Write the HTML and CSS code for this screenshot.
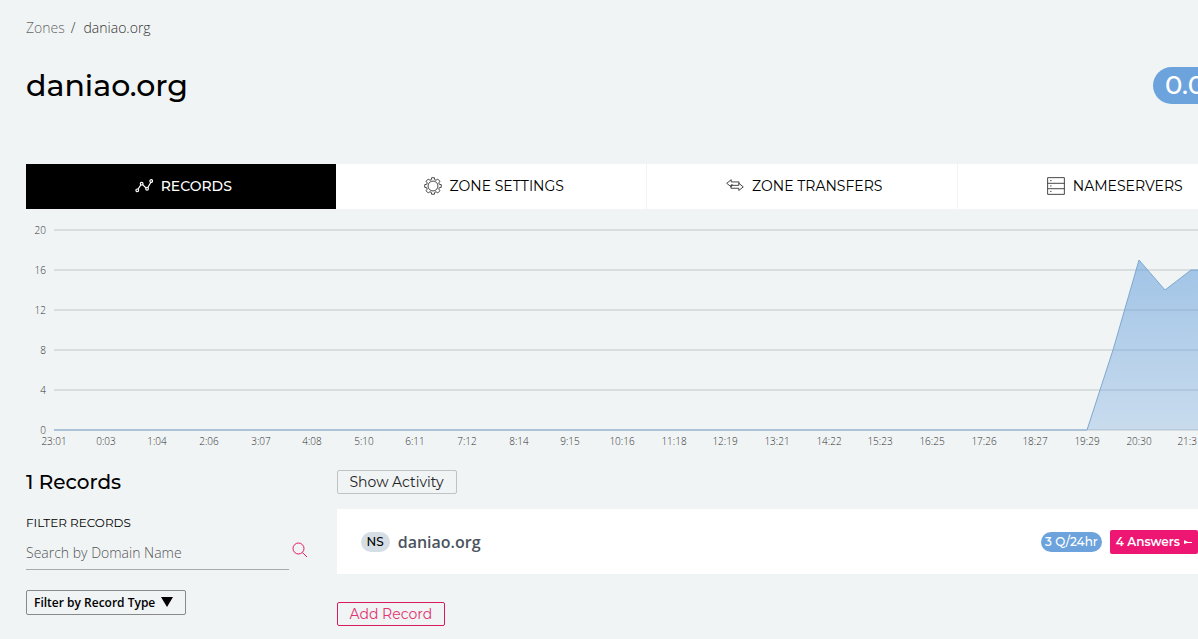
FILE: index.html
```html
<!DOCTYPE html>
<html lang="en">
<head>
<meta charset="utf-8">
<title>daniao.org</title>
<link rel="stylesheet" href="styles.css">
</head>
<body>
<div class="page">
  <nav class="breadcrumb" aria-label="Breadcrumb">
    <a class="crumb-link" href="#">Zones</a><span class="crumb-sep">/</span><span>daniao.org</span>
  </nav>
  <header class="zone-header">
    <h1 class="zone-title">daniao.org</h1>
    <span class="rate-pill">0.00</span>
  </header>
  <nav class="tabs" aria-label="Zone sections">
    <a class="tab tab-active" href="#">
      <svg class="tab-icon" viewBox="0 0 20 20" aria-hidden="true"><path d="M3.400 13.500 6.600 8.600M8.500 8.500l4 4M14.200 11.800l3.600-6.200"/><circle cx="2.500" cy="14.800" r="1.500"/><circle cx="7.400" cy="7.400" r="1.500"/><circle cx="13.400" cy="13" r="1.500"/><circle cx="18" cy="4.500" r="1.500"/></svg>
      Records
    </a>
    <a class="tab" href="#">
      <svg class="tab-icon" viewBox="0 0 20 20" aria-hidden="true"><circle cx="10" cy="10" r="5.500"/><path d="M8.500.8h3l.4 2.200 1.500.6 1.900-1.300 2.400 2.400-1.300 1.900.6 1.500 2.200.4v3l-2.200.4-.6 1.500 1.300 1.900-2.400 2.400-1.900-1.300-1.500.6-.4 2.200h-3l-.4-2.200-1.500-.6-1.900 1.300-2.400-2.400 1.300-1.900-.6-1.500L.8 11.500v-3L3 8.100l.6-1.500-1.300-1.900 2.400-2.400 1.900 1.300L8.100 3z"/></svg>
      Zone Settings
    </a>
    <a class="tab" href="#">
      <svg class="tab-icon" viewBox="0 0 20 20" aria-hidden="true"><path d="M14.500 7.700V5.500H5.800V3L.8 7l5 4V8.700h1.700M5.500 9.300v3.200h8.700V15l5-4-5-4v2.300z"/></svg>
      Zone Transfers
    </a>
    <a class="tab" href="#">
      <svg class="tab-icon" viewBox="0 0 20 20" aria-hidden="true"><path d="M.7.7h18.600v18.600H.7zM.7 7h18.600M.7 13h18.600M3.500 4h1.500M3.500 10h1.500M3.500 16h1.500"/></svg>
      Nameservers
    </a>
  </nav>

  <svg class="chart" viewBox="0 0 1242 240" role="img" aria-label="Queries over the last 24 hours">
    <defs>
      <linearGradient id="area" x1="0" y1="0" x2="0" y2="1">
        <stop offset="0" stop-color="#6ca3dc" stop-opacity=".6"/>
        <stop offset="1" stop-color="#6ca3dc" stop-opacity=".3"/>
      </linearGradient>
    </defs>
    <path class="gridline" d="M28 21H1242M28 61H1242M28 101H1242M28 141H1242M28 181H1242M28 221H1242"/>
    <path class="area-fill" d="M1061 221 1087 141 1113 51 1139 81 1165 61H1242V221z"/>
    <path class="area-line" d="M28 221H1061L1087 141 1113 51 1139 81 1165 61H1242"/>
    <g class="axis axis-y">
      <text x="20" y="25">20</text><text x="20" y="65">16</text><text x="20" y="105">12</text><text x="20" y="145">8</text><text x="20" y="185">4</text><text x="20" y="225">0</text>
    </g>
    <g class="axis axis-x">
      <text x="28" y="236">23:01</text><text x="80" y="236">0:03</text><text x="131" y="236">1:04</text><text x="183" y="236">2:06</text><text x="235" y="236">3:07</text><text x="286" y="236">4:08</text><text x="338" y="236">5:10</text><text x="389" y="236">6:11</text><text x="441" y="236">7:12</text><text x="493" y="236">8:14</text><text x="544" y="236">9:15</text><text x="596" y="236">10:16</text><text x="648" y="236">11:18</text><text x="699" y="236">12:19</text><text x="751" y="236">13:21</text><text x="803" y="236">14:22</text><text x="854" y="236">15:23</text><text x="906" y="236">16:25</text><text x="958" y="236">17:26</text><text x="1009" y="236">18:27</text><text x="1061" y="236">19:29</text><text x="1113" y="236">20:30</text><text x="1164" y="236">21:31</text>
    </g>
  </svg>

  <div class="content">
    <aside class="sidebar">
      <h2 class="count">1 Records</h2>
      <label class="filter-label" for="search">Filter Records</label>
      <form class="search">
        <input class="search-input" id="search" type="text" placeholder="Search by Domain Name">
        <button class="search-button" type="button" aria-label="Search">
          <svg class="search-icon" viewBox="0 0 16 16" aria-hidden="true"><circle cx="6.500" cy="6.500" r="5.500"/><path d="M10.500 10.500 15 15"/></svg>
        </button>
      </form>
      <div class="type-filter">
        <select class="type-select" aria-label="Filter by Record Type"><option>Filter by Record Type</option></select>
        <svg class="type-arrow" viewBox="0 0 12 10" aria-hidden="true"><path d="M0 0h12L6 10z"/></svg>
      </div>
    </aside>
    <main class="records">
      <button class="outline-button" type="button">Show Activity</button>
      <article class="record">
        <span class="record-type">NS</span>
        <a class="record-name" href="#">daniao.org</a>
        <span class="query-pill">3 Q/24hr</span>
        <button class="answers" type="button">4 Answers
          <svg class="answers-icon" viewBox="0 0 8 6" aria-hidden="true"><path d="M0 1 4 3H8V4H3L0 5z"/></svg>
        </button>
      </article>
      <button class="outline-button add-button" type="button">Add Record</button>
    </main>
  </div>
</div>
</body>
</html>
```
FILE: styles.css
```css
* { box-sizing: border-box; }
body {
  margin: 0;
  background: #f0f4f5;
  color: #000;
  font-family: "Open Sans", sans-serif;
  overflow: hidden;
}
h1, h2 { margin: 0; font-weight: 500; }
button, input, select { font: inherit; color: inherit; margin: 0; }
a { color: inherit; text-decoration: none; }
svg { display: block; fill: none; stroke: currentColor; }

.page { min-width: 1294px; padding: 18px 26px 12px; }
.zone-title, .rate-pill, .tab, .count, .filter-label, .outline-button, .query-pill, .answers, .record-type {
  font-family: Montserrat, Inter, sans-serif;
}
.breadcrumb { font-size: 14px; line-height: 20px; font-weight: 300; color: #333; }
.crumb-link { color: #666; }
.crumb-sep { margin: 0 8px 0 6px; }
.zone-header {
  display: flex;
  align-items: center;
  justify-content: space-between;
  height: 37px;
  margin: 29px 0 60px;
}
.zone-title { font-size: 30px; line-height: 37px; font-weight: 500; }
.rate-pill {
  min-width: 115px;
  padding: 0 12px;
  border-radius: 19px;
  background: #6ca3dc;
  color: #fff;
  font-size: 26px;
  line-height: 37px;
  font-weight: 500;
}
.tabs { display: grid; grid-template-columns: repeat(4, 1fr); background: #fff; }
.tab {
  display: flex;
  align-items: center;
  justify-content: center;
  gap: 8px;
  height: 45px;
  padding: 0 0 2px 5px;
  border-right: 1px solid #f0f4f5;
  font-size: 14px;
  text-transform: uppercase;
}
.tab-active { background: #000; color: #fff; border-color: #fff; font-weight: 500; background-clip: padding-box; }
.tab-icon { width: 18px; height: 18px; stroke: #333; stroke-width: 1; }
.tab-active .tab-icon { stroke: #fff; stroke-width: 1.3; }

.chart { width: 100%; height: auto; }
.gridline { stroke: #d8dddf; stroke-width: 2; }
.area-fill { fill: url(#area); stroke: none; }
.area-line { stroke: #7fa8d0; stroke-width: 1; }
.axis { fill: #333; stroke: none; font-size: 10px; font-weight: 300; }
.axis-y { text-anchor: end; }
.axis-x { text-anchor: middle; }

.content { display: grid; grid-template-columns: 1fr 3fr; padding-top: 21px; }
.sidebar { padding-right: 29px; }
.count { font-size: 20px; line-height: 24px; }
.filter-label { display: block; margin-top: 19px; font-size: 12px; line-height: 20px; text-transform: uppercase; }
.search { display: flex; }
.search-input {
  flex: 1;
  min-width: 0;
  height: 37px;
  padding: 2px 0 0;
  border: 0;
  border-bottom: 1px solid #a5abae;
  background: transparent;
  font-size: 14px;
  font-weight: 300;
}
.search-input::placeholder { color: #555; }
.search-button { padding: 9px 0 0 3px; border: 0; background: none; color: #e5195f; display: flex; }
.search-icon { width: 16px; height: 16px; stroke-width: 1; }
.type-filter { position: relative; width: 160px; margin-top: 20px; }
.type-select {
  display: block;
  width: 100%;
  height: 25px;
  padding: 0 7px;
  border: 1px solid #888;
  border-radius: 2px;
  background: transparent;
  appearance: none;
  font-size: 12px;
  font-weight: 600;
}
.type-arrow { position: absolute; right: 13px; top: 7px; width: 12px; height: 10px; fill: #000; stroke: none; pointer-events: none; }

.records { display: flex; flex-direction: column; align-items: flex-start; }
.outline-button {
  height: 24px;
  padding: 0 12px;
  border: 1px solid #bfc3c5;
  border-radius: 2px;
  background: transparent;
  color: #222;
  font-size: 14px;
  line-height: 22px;
  font-weight: 400;
}
.add-button { border-color: #d81b60; color: #e0346f; }
.record {
  display: flex;
  align-items: center;
  align-self: stretch;
  height: 65px;
  margin: 15px 0 28px;
  padding: 0 70px 0 24px;
  background: #fff;
}
.record-type { padding: 0 6px; border-radius: 10px; background: #d5dde5; font-size: 12px; line-height: 20px; font-weight: 500; }
.record-name { margin: 0 auto 0 8px; color: #4b545e; font-size: 16px; font-weight: 600; }
.query-pill { padding: 0 4px; border-radius: 10px; background: #6ca3dc; color: #fff; font-size: 12px; line-height: 20px; font-weight: 500; }
.answers {
  display: flex;
  align-items: center;
  gap: 4px;
  height: 24px;
  margin-left: 8px;
  padding: 0 6px;
  border: 0;
  border-radius: 2px;
  background: #ee1673;
  color: #fff;
  font-size: 12px;
  font-weight: 600;
}
.answers-icon { width: 8px; height: 6px; fill: #fff; stroke: none; }
```
